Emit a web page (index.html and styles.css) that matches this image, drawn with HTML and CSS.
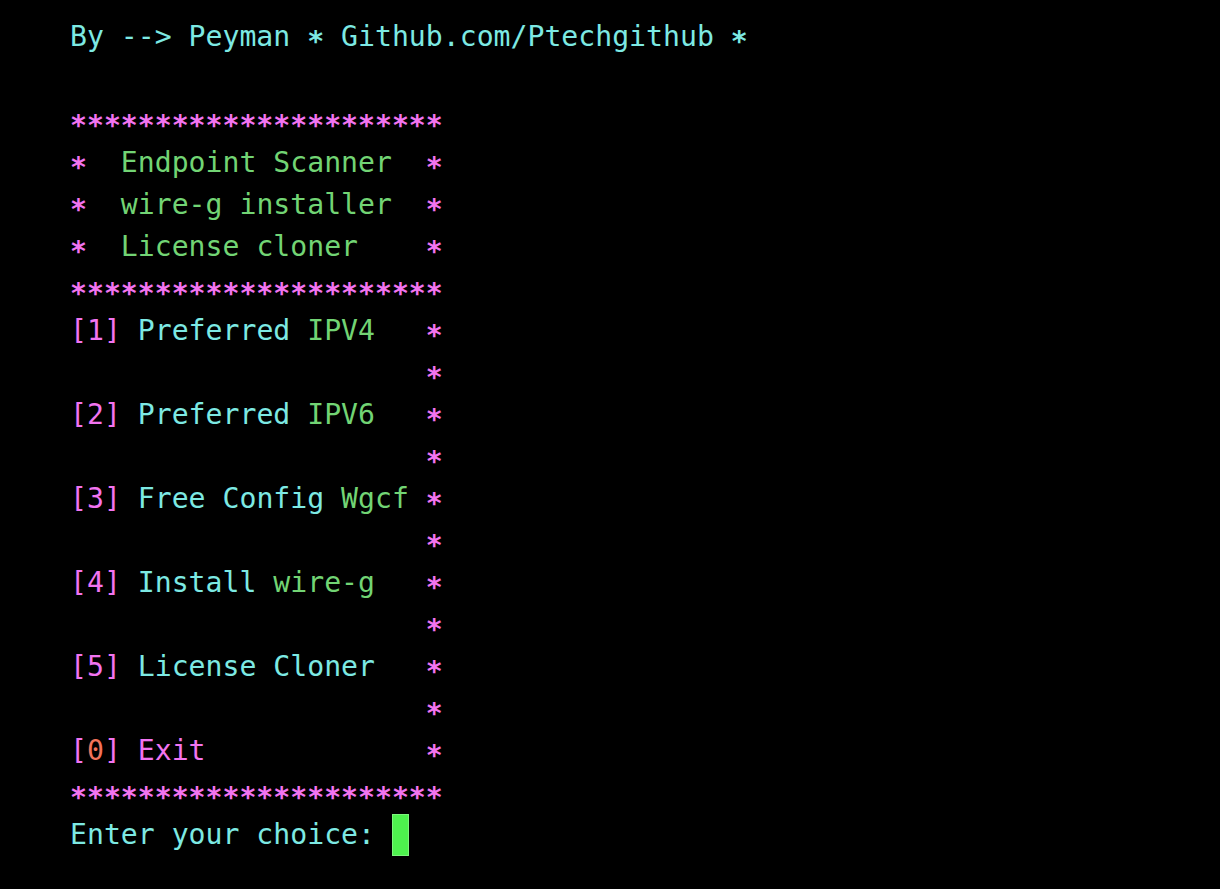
FILE: index.html
```html
<!DOCTYPE html>
<html>
<head>
<meta charset="utf-8">
<link rel="stylesheet" href="styles.css">
</head>
<body>
<pre class="term"><span class="c">By --&gt; Peyman <span class="sc">*</span> Github.com/Ptechgithub <span class="sc">*</span></span>

<span class="s">**********************</span>
<span class="s">*</span>  <span class="g">Endpoint Scanner</span>  <span class="s">*</span>
<span class="s">*</span>  <span class="g">wire-g installer</span>  <span class="s">*</span>
<span class="s">*</span>  <span class="g">License cloner</span>    <span class="s">*</span>
<span class="s">**********************</span>
<span class="m">[1]</span> <span class="c">Preferred</span> <span class="g">IPV4</span>   <span class="s">*</span>
                     <span class="s">*</span>
<span class="m">[2]</span> <span class="c">Preferred</span> <span class="g">IPV6</span>   <span class="s">*</span>
                     <span class="s">*</span>
<span class="m">[3]</span> <span class="c">Free Config</span> <span class="g">Wgcf</span> <span class="s">*</span>
                     <span class="s">*</span>
<span class="m">[4]</span> <span class="c">Install</span> <span class="g">wire-g</span>   <span class="s">*</span>
                     <span class="s">*</span>
<span class="m">[5]</span> <span class="c">License Cloner</span>   <span class="s">*</span>
                     <span class="s">*</span>
<span class="m">[<span class="o">0</span>] Exit</span>             <span class="s">*</span>
<span class="s">**********************</span>
<span class="c">Enter your choice: </span><span class="cursor"> </span></pre>
</body>
</html>
```

FILE: styles.css
```css
html, body {
  margin: 0;
  padding: 0;
  background: #000;
  height: 100%;
}
.term {
  margin: 0;
  padding: 16px 0 0 70px;
  font-family: "DejaVu Sans Mono", "Liberation Mono", monospace;
  font-size: 28.15px;
  line-height: 42px;
  color: #7be8e2;
}
.c { color: #7de9e3; }
.g { color: #72d474; }
.m { color: #f274f0; }
.o { color: #f2735a; }
.s {
  color: #f274f0;
  display: inline-block;
  font-weight: bold;
  transform: translateY(5px);
}
.sc {
  display: inline-block;
  font-weight: bold;
  transform: translateY(5px);
}
.cursor {
  display: inline-block;
  width: 17px;
  height: 42px;
  vertical-align: top;
  background: #4ef24e;
  box-shadow: inset 0 0 0 1px #7cf77c;
}
```
